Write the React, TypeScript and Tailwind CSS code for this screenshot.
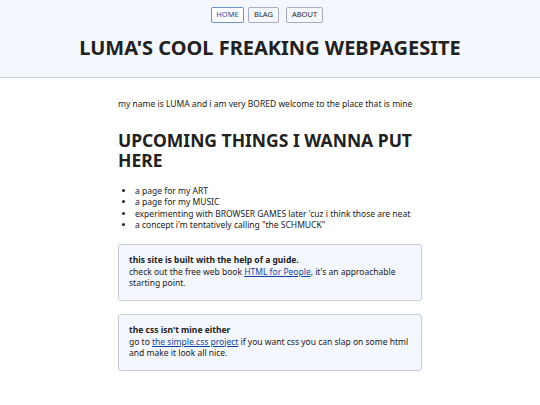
import React from "react";

export default function App() {
  return (
    <div className="min-h-[405px] bg-white text-[#212121]" style={{ fontFamily: '"Noto Sans", sans-serif' }}>
      <header className="bg-[#f5f7ff] border-b border-[#c9ccd8] h-[78px] flex flex-col items-center">
        <nav className="flex gap-[5px] mt-[7px] text-[7.5px] leading-none ml-[-6px]">
          <a className="w-[33px] h-[16px] flex items-center justify-center border border-[#0d47a1]/60 text-[#0d47a1] rounded-[2px] bg-white">HOME</a>
          <a className="w-[31px] h-[16px] flex items-center justify-center border border-[#898ea4]/70 text-[#212121] rounded-[2px] ml-[-1px]">BLAG</a>
          <a className="w-[37px] h-[16px] flex items-center justify-center border border-[#898ea4]/70 text-[#212121] rounded-[2px] ml-[2px]">ABOUT</a>
        </nav>
        <h1 className="mt-[12px] text-[20px] font-bold leading-[26px]">LUMA'S COOL FREAKING WEBPAGESITE</h1>
      </header>
      <main className="w-[304px] ml-[118px] text-[8.5px] leading-[11.6px]">
        <p className="mt-[20px]">my name is LUMA and i am very BORED welcome to the place that is mine</p>
        <h2 className="mt-[20px] text-[17.5px] font-bold leading-[20.5px]">UPCOMING THINGS I WANNA PUT HERE</h2>
        <ul className="mt-[14px] pl-[17px] list-disc">
          <li>a page for my ART</li>
          <li>a page for my MUSIC</li>
          <li>experimenting with BROWSER GAMES later 'cuz i think those are neat</li>
          <li>a concept i'm tentatively calling "the SCHMUCK"</li>
        </ul>
        <div className="mt-[13px] bg-[#f5f7ff] border border-[#c9ccd8] rounded-[3px] pl-[10px] pr-[6px] pt-[9px] h-[57px]">
          <p className="font-bold">this site is built with the help of a guide.</p>
          <p>
            check out the free web book <a className="text-[#0d47a1] underline">HTML for People</a>, it's an approachable starting point.
          </p>
        </div>
        <div className="mt-[13px] bg-[#f5f7ff] border border-[#c9ccd8] rounded-[3px] pl-[10px] pr-[6px] pt-[9px] h-[57px]">
          <p className="font-bold">the css isn't mine either</p>
          <p>
            go to <a className="text-[#0d47a1] underline">the simple.css project</a> if you want css you can slap on some html and make it look all nice.
          </p>
        </div>
      </main>
    </div>
  );
}
